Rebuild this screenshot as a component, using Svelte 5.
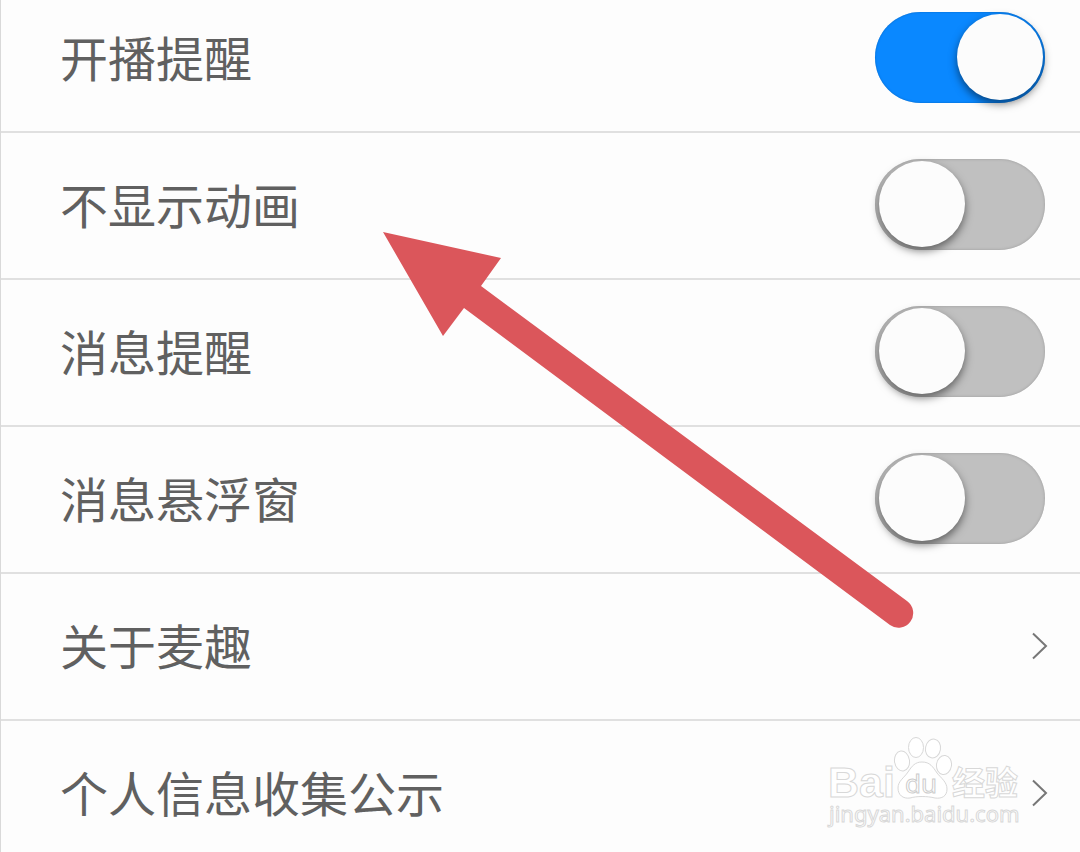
<script lang="ts">
	// Settings with a switch
	let switches = [
		{ id: 'live', label: '开播提醒', on: true },
		{ id: 'animation', label: '不显示动画', on: false },
		{ id: 'message', label: '消息提醒', on: false },
		{ id: 'float', label: '消息悬浮窗', on: false }
	];

	// Settings that open another page
	let links = [
		{ href: '#about', label: '关于麦趣' },
		{ href: '#privacy', label: '个人信息收集公示' }
	];
</script>

<main>
	<div class="list">
		{#each switches as item}
			<div class="row">
				<label for={item.id}>{item.label}</label>
				<input type="checkbox" role="switch" id={item.id} bind:checked={item.on} />
			</div>
		{/each}
		{#each links as link}
			<a class="row" href={link.href}>
				<span>{link.label}</span>
				<svg class="chevron" viewBox="0 0 16 28" aria-hidden="true">
					<path d="M1 1.5 L14 14 L1 26.5" />
				</svg>
			</a>
		{/each}
	</div>

	<svg class="arrow" viewBox="0 0 532 398" aria-hidden="true">
		<path d="M1 1 L119 27 L99 55 L525 370 A14.5 14.5 0 0 1 508 394 L82 77 L61 105 Z" />
	</svg>

	<svg class="watermark" viewBox="0 0 204 96" aria-hidden="true">
		<text class="brand" x="2" y="61">Bai</text>
		<ellipse cx="76" cy="25" rx="7.5" ry="10" transform="rotate(-8 76 25)" />
		<ellipse cx="90" cy="11.5" rx="7.5" ry="10" />
		<ellipse cx="107" cy="12.5" rx="7.5" ry="9.5" transform="rotate(10 107 12.5)" />
		<ellipse cx="118" cy="29" rx="7.5" ry="9.5" transform="rotate(8 118 29)" />
		<path
			d="M96 26 C104 26 107 31 111 37 C115 42 121 46 121 53 C121 60 116 63 109 62 C101 60 91 60 84 62 C77 63 72 59 72 52 C72 45 78 42 82 36 C86 30 89 26 96 26 Z"
		/>
		<text class="du" x="79" y="57">du</text>
		<text class="cjk" x="126" y="59">经验</text>
		<text class="site" x="3" y="86">jingyan.baidu.com</text>
	</svg>
</main>

<style>
	:global(body) {
		margin: 0;
		background: #fdfdfd;
	}

	main {
		position: relative;
		box-sizing: border-box;
		height: 100vh;
		overflow: hidden;
		border-left: 1px solid #d9d9d9;
		font-family: 'Noto Sans CJK SC', sans-serif;
		color: #606060;
	}

	/* The list is scrolled slightly past its first row */
	.list {
		margin-top: -14px;
	}

	.row {
		box-sizing: border-box;
		display: flex;
		align-items: center;
		justify-content: space-between;
		height: 147px;
		padding: 0 35px 2px 59px;
		border-bottom: 2px solid #e0e0e0;
		font-size: 48px;
		line-height: 72px;
		color: inherit;
		text-decoration: none;
	}

	label,
	span {
		padding-bottom: 4px;
	}

	input {
		appearance: none;
		position: relative;
		flex: none;
		width: 170px;
		height: 91px;
		margin: 0;
		border-radius: 46px;
		background: #c0c0c0;
		box-shadow: inset 0 0 3px #999;
		cursor: pointer;
	}

	input::before {
		content: '';
		position: absolute;
		top: 2px;
		left: 4px;
		width: 86px;
		height: 86px;
		border-radius: 50%;
		background: #fcfcfc;
		box-shadow: 0 4px 9px rgba(0, 0, 0, 0.5);
	}

	input:checked {
		background: #0a88ff;
		box-shadow: inset 0 0 2px #0660b8;
	}

	input:checked::before {
		left: 82px;
	}

	.chevron {
		width: 16px;
		height: 28px;
		margin-right: -3px;
		fill: none;
		stroke: #777;
		stroke-width: 2;
	}

	.arrow {
		position: absolute;
		top: 231px;
		left: 381px;
		width: 532px;
		height: 398px;
		fill: #db565b;
		pointer-events: none;
	}

	.watermark {
		position: absolute;
		right: 50px;
		bottom: 20px;
		width: 204px;
		height: 96px;
		fill: #fff;
		stroke: #d8d8d8;
		stroke-width: 1;
		pointer-events: none;
	}

	.brand {
		font: bold 43px 'Liberation Sans', sans-serif;
	}

	.du {
		font: 26px 'Noto Sans', sans-serif;
		stroke: #ccc;
	}

	.cjk {
		font: bold 33px 'Noto Sans CJK SC', sans-serif;
	}

	.site {
		font: 22px 'Noto Sans', sans-serif;
	}
</style>
